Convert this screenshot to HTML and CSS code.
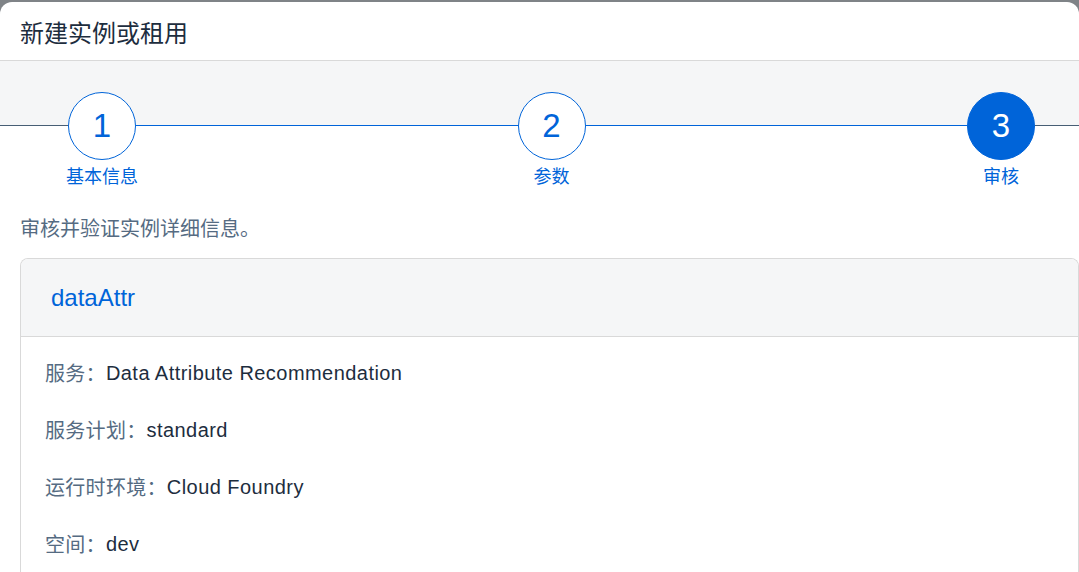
FILE: index.html
```html
<!DOCTYPE html>
<html lang="zh-CN">
<head>
    <meta charset="UTF-8">
    <meta name="viewport" content="width=device-width, initial-scale=1.0">
    <title>新建实例或租用</title>
    <link rel="stylesheet" href="styles.css">
</head>
<body>
    <div class="dialog">
        <header class="dialog-header">新建实例或租用</header>

        <!-- pasos del asistente -->
        <div class="wizard">
            <div class="seg seg-start"></div>
            <div class="step">
                <div class="circle">1</div>
                <div class="step-label">基本信息</div>
            </div>
            <div class="seg seg-done"></div>
            <div class="step">
                <div class="circle">2</div>
                <div class="step-label">参数</div>
            </div>
            <div class="seg seg-done"></div>
            <div class="step current">
                <div class="circle">3</div>
                <div class="step-label">审核</div>
            </div>
            <div class="seg seg-end"></div>
        </div>

        <p class="intro">审核并验证实例详细信息。</p>

        <div class="card">
            <div class="card-header">dataAttr</div>
            <div class="card-body">
                <div class="row"><span class="lbl">服务：</span><span class="val">Data Attribute Recommendation</span></div>
                <div class="row"><span class="lbl">服务计划：</span><span class="val">standard</span></div>
                <div class="row"><span class="lbl">运行时环境：</span><span class="val">Cloud Foundry</span></div>
                <div class="row"><span class="lbl">空间：</span><span class="val">dev</span></div>
            </div>
        </div>
    </div>
</body>
</html>
```

FILE: styles.css
```css
html, body {
    margin: 0;
    overflow: hidden;
}
body {
    font-family: "Liberation Sans", "Noto Sans CJK SC", sans-serif;
    background-color: #7f8387;
    color: #1d2d3e;
}
.dialog {
    margin-top: 2px;
    min-height: calc(100vh - 2px);
    background-color: white;
    border-radius: 12px 12px 0 0;
    overflow: hidden;
}
.dialog-header {
    display: flex;
    align-items: center;
    height: 58px;
    padding: 0 20px;
    font-family: "Noto Sans CJK SC", sans-serif;
    font-size: 24px;
    color: #1d2d3e;
    border-bottom: 1px solid #d9d9d9;
    box-shadow: 0 1px 2px rgba(0, 0, 0, 0.08);
}

/* asistente */
.wizard {
    display: flex;
    align-items: flex-start;
    padding-top: 31px;
    background: linear-gradient(#f5f6f7 0, #f5f6f7 64px, white 64px);
}
.seg {
    height: 1px;
    margin-top: 33px;
    background-color: #475e75;
}
.seg-start {
    width: 68px;
}
.seg-done {
    flex: 1;
    background-color: #0064d9;
}
.seg-end {
    width: 44px;
}
.step {
    width: 68px;
    display: flex;
    flex-direction: column;
    align-items: center;
}
.circle {
    box-sizing: border-box;
    width: 68px;
    height: 68px;
    border: 1px solid #0064d9;
    border-radius: 50%;
    background-color: white;
    color: #0064d9;
    font-size: 33px;
    display: flex;
    align-items: center;
    justify-content: center;
}
.current .circle {
    background-color: #0064d9;
    color: white;
}
.step-label {
    width: 140px;
    margin-top: 3px;
    text-align: center;
    font-family: "Noto Sans CJK SC", sans-serif;
    font-size: 18px;
    line-height: 24px;
    color: #0064d9;
}

.intro {
    margin: 27px 0 16px;
    padding: 0 20px;
    font-family: "Noto Sans CJK SC", sans-serif;
    font-size: 20px;
    line-height: 28px;
    color: #556b82;
}

/* tarjeta */
.card {
    margin-left: 20px;
    border: 1px solid #d9d9d9;
    border-bottom: none;
    border-radius: 8px 8px 0 0;
    overflow: hidden;
}
.card-header {
    height: 77px;
    display: flex;
    align-items: center;
    padding-left: 30px;
    background-color: #f5f6f7;
    border-bottom: 1px solid #d9d9d9;
    font-size: 24px;
    color: #0064d9;
}
.card-body {
    display: flex;
    flex-direction: column;
    gap: 33px;
    padding: 24px 24px 60px;
}
.row {
    display: flex;
    line-height: 24px;
    white-space: nowrap;
}
.lbl {
    font-family: "Noto Sans CJK SC", sans-serif;
    font-size: 20px;
    letter-spacing: 0.3px;
    color: #556b82;
}
.val {
    font-size: 20px;
    letter-spacing: 0.45px;
    color: #1d2d3e;
}
```
